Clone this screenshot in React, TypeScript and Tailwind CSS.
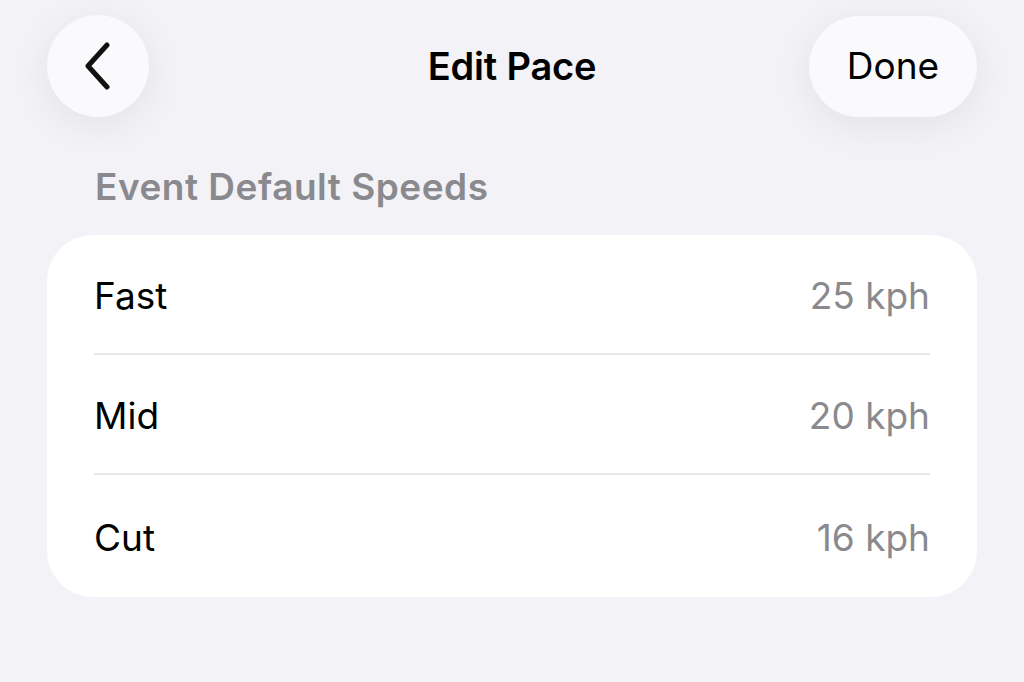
import React from 'react';

const rows = [
  { label: 'Fast', value: '25 kph' },
  { label: 'Mid', value: '20 kph' },
  { label: 'Cut', value: '16 kph' },
];

export default function App() {
  return (
    <div
      className="w-[1024px] h-[682px] bg-[#f2f2f7] overflow-hidden px-[47px] pt-[15px]"
      style={{ fontFamily: 'Inter, "Noto Sans", sans-serif' }}
    >
      {/* Nav bar */}
      <div className="grid grid-cols-[1fr_auto_1fr] items-center h-[102px]">
        <div className="flex justify-start">
          <button className="w-[102px] h-[102px] rounded-full bg-[#fafafd] flex items-center justify-center shadow-[0_8px_40px_rgba(0,0,0,0.07)]">
            <svg width="30" height="48" viewBox="0 0 30 48" fill="none">
              <path d="M24 3 L5 24 L24 45" stroke="#111" strokeWidth="5" strokeLinecap="round" strokeLinejoin="round" />
            </svg>
          </button>
        </div>
        <h1 className="text-[38px] font-semibold text-black tracking-[-0.2px]">Edit Pace</h1>
        <div className="flex justify-end">
          <button className="w-[168px] h-[101px] rounded-full bg-[#fafafd] text-[37px] text-black shadow-[0_8px_40px_rgba(0,0,0,0.07)]">
            Done
          </button>
        </div>
      </div>

      {/* Section header */}
      <div className="pl-[48px] mt-[48px] text-[37px] font-semibold text-[#8a8a8e] leading-[44px] tracking-[0.5px]">
        Event Default Speeds
      </div>

      {/* Card */}
      <div className="mt-[26px] bg-white rounded-[46px] px-[47px]">
        {rows.map((r, i) => (
          <div
            key={r.label}
            className={`flex items-center justify-between pt-[4px] ${i < rows.length - 1 ? 'h-[120px] border-b-2 border-[#e8e8ec]' : 'h-[122px]'}`}
          >
            <span className="text-[37px] text-black">{r.label}</span>
            <span className="text-[37px] text-[#8a8a8e]">{r.value}</span>
          </div>
        ))}
      </div>
    </div>
  );
}
